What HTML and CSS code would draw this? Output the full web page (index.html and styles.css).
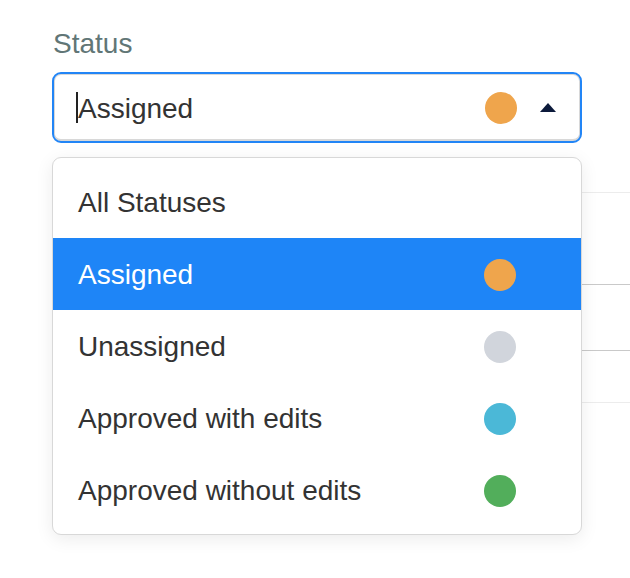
FILE: index.html
```html
<!DOCTYPE html>
<html lang="en">
<head>
<meta charset="utf-8">
<title>Status filter</title>
<link rel="stylesheet" href="styles.css">
</head>
<body>
<div class="page">
  <label class="label">Status</label>
  <div class="select">
    <span class="caret"></span>
    <span class="value">Assigned</span>
    <span class="dot dot-orange"></span>
    <span class="arrow"></span>
  </div>
  <div class="table">
    <div class="row row-a"></div>
    <div class="row row-b"></div>
    <div class="row row-c"></div>
    <div class="row row-d"></div>
  </div>
  <ul class="menu">
    <li class="item"><span>All Statuses</span></li>
    <li class="item active"><span>Assigned</span><span class="dot dot-orange"></span></li>
    <li class="item"><span>Unassigned</span><span class="dot dot-gray"></span></li>
    <li class="item"><span>Approved with edits</span><span class="dot dot-blue"></span></li>
    <li class="item"><span>Approved without edits</span><span class="dot dot-green"></span></li>
  </ul>
</div>
</body>
</html>
```

FILE: styles.css
```css
* { box-sizing: border-box; }
html, body { margin: 0; padding: 0; background: #fff; }
body {
  font-family: "Liberation Sans", Arial, Helvetica, sans-serif;
  font-size: 28px;
  line-height: 32px;
  color: #333;
}
.page {
  position: relative;
  padding: 28px 0 0 52px;
  height: 578px;
  overflow: hidden;
}
.label {
  display: block;
  color: #617676;
  padding-left: 1px;
}
.select {
  margin-top: 12px;
  width: 530px;
  height: 71px;
  border: 2px solid #2285f6;
  border-radius: 9px;
  box-shadow: inset 0 0 0 1px #d8d8d8, inset 0 -2px 0 #d8d8d8;
  display: flex;
  align-items: center;
  padding: 2px 24px 0 22px;
}
.caret {
  width: 2px;
  height: 31px;
  background: #222;
  margin-top: -2px;
}
.value {
  flex: 1;
  color: #333;
}
.dot {
  width: 32px;
  height: 32px;
  border-radius: 50%;
  flex: none;
}
.dot-orange { background: #efa54c; }
.dot-gray { background: #d1d5dc; }
.dot-blue { background: #4bb8d7; }
.dot-green { background: #52ae5b; }
.select .dot { margin-right: 23px; margin-top: -2px; }
.arrow {
  width: 0;
  height: 0;
  border-left: 8px solid transparent;
  border-right: 8px solid transparent;
  border-bottom: 9px solid #0c1a3b;
  margin-top: -3px;
}
.row { border-bottom: 1px solid #ececec; }
.row-a { height: 50px; }
.row-b { height: 92px; border-bottom-color: #c9c9c9; }
.row-c { height: 66px; border-bottom-color: #c9c9c9; }
.row-d { height: 52px; }
.menu {
  position: absolute;
  top: 157px;
  left: 52px;
  width: 530px;
  margin: 0;
  padding: 8px 0;
  list-style: none;
  background: #fff;
  border: 1px solid #d8d8d8;
  border-radius: 9px;
  box-shadow: 0 4px 18px rgba(0, 0, 0, 0.08);
}
.item {
  height: 72px;
  display: flex;
  align-items: center;
  justify-content: space-between;
  padding: 2px 65px 0 25px;
  color: #333;
}
.item.active {
  background: #1e85f7;
  color: #fff;
}
```
